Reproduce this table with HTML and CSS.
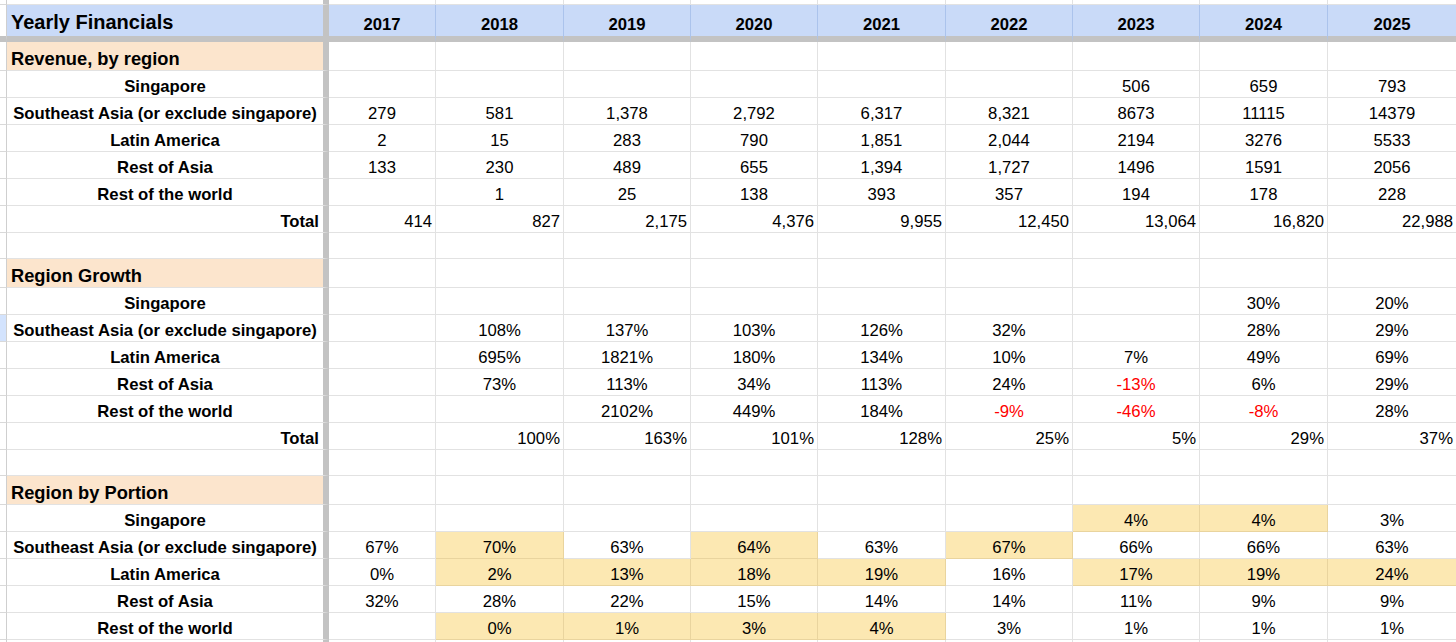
FILE: index.html
```html
<!DOCTYPE html>
<html lang="en">
<head>
<meta charset="utf-8">
<title>Yearly Financials</title>
<link rel="stylesheet" href="styles.css">
</head>
<body>
<div class="sheet">
  <div class="row top"><div class="rh"></div><div class="lab"></div><div></div><div></div><div></div><div></div><div></div><div></div><div></div><div></div><div></div></div>
  <div class="row head"><div class="rh"></div><div class="lab title">Yearly Financials</div><div>2017</div><div>2018</div><div>2019</div><div>2020</div><div>2021</div><div>2022</div><div>2023</div><div>2024</div><div>2025</div></div>

  <div class="row sec"><div class="rh"></div><div class="lab">Revenue, by region</div><div></div><div></div><div></div><div></div><div></div><div></div><div></div><div></div><div></div></div>
  <div class="row"><div class="rh"></div><div class="lab">Singapore</div><div></div><div></div><div></div><div></div><div></div><div></div><div>506</div><div>659</div><div>793</div></div>
  <div class="row"><div class="rh"></div><div class="lab">Southeast Asia (or exclude singapore)</div><div>279</div><div>581</div><div>1,378</div><div>2,792</div><div>6,317</div><div>8,321</div><div>8673</div><div>11115</div><div>14379</div></div>
  <div class="row"><div class="rh"></div><div class="lab">Latin America</div><div>2</div><div>15</div><div>283</div><div>790</div><div>1,851</div><div>2,044</div><div>2194</div><div>3276</div><div>5533</div></div>
  <div class="row"><div class="rh"></div><div class="lab">Rest of Asia</div><div>133</div><div>230</div><div>489</div><div>655</div><div>1,394</div><div>1,727</div><div>1496</div><div>1591</div><div>2056</div></div>
  <div class="row"><div class="rh"></div><div class="lab">Rest of the world</div><div></div><div>1</div><div>25</div><div>138</div><div>393</div><div>357</div><div>194</div><div>178</div><div>228</div></div>
  <div class="row tot"><div class="rh"></div><div class="lab">Total</div><div>414</div><div>827</div><div>2,175</div><div>4,376</div><div>9,955</div><div>12,450</div><div>13,064</div><div>16,820</div><div>22,988</div></div>
  <div class="row gap"><div class="rh"></div><div class="lab"></div><div></div><div></div><div></div><div></div><div></div><div></div><div></div><div></div><div></div></div>

  <div class="row sec"><div class="rh"></div><div class="lab">Region Growth</div><div></div><div></div><div></div><div></div><div></div><div></div><div></div><div></div><div></div></div>
  <div class="row"><div class="rh"></div><div class="lab">Singapore</div><div></div><div></div><div></div><div></div><div></div><div></div><div></div><div>30%</div><div>20%</div></div>
  <div class="row"><div class="rh sel"></div><div class="lab">Southeast Asia (or exclude singapore)</div><div></div><div>108%</div><div>137%</div><div>103%</div><div>126%</div><div>32%</div><div></div><div>28%</div><div>29%</div></div>
  <div class="row"><div class="rh"></div><div class="lab">Latin America</div><div></div><div>695%</div><div>1821%</div><div>180%</div><div>134%</div><div>10%</div><div>7%</div><div>49%</div><div>69%</div></div>
  <div class="row"><div class="rh"></div><div class="lab">Rest of Asia</div><div></div><div>73%</div><div>113%</div><div>34%</div><div>113%</div><div>24%</div><div class="neg">-13%</div><div>6%</div><div>29%</div></div>
  <div class="row"><div class="rh"></div><div class="lab">Rest of the world</div><div></div><div></div><div>2102%</div><div>449%</div><div>184%</div><div class="neg">-9%</div><div class="neg">-46%</div><div class="neg">-8%</div><div>28%</div></div>
  <div class="row tot"><div class="rh"></div><div class="lab">Total</div><div></div><div>100%</div><div>163%</div><div>101%</div><div>128%</div><div>25%</div><div>5%</div><div>29%</div><div>37%</div></div>
  <div class="row gap"><div class="rh"></div><div class="lab"></div><div></div><div></div><div></div><div></div><div></div><div></div><div></div><div></div><div></div></div>

  <div class="row sec"><div class="rh"></div><div class="lab">Region by Portion</div><div></div><div></div><div></div><div></div><div></div><div></div><div></div><div></div><div></div></div>
  <div class="row"><div class="rh"></div><div class="lab">Singapore</div><div></div><div></div><div></div><div></div><div></div><div></div><div class="hl">4%</div><div class="hl">4%</div><div>3%</div></div>
  <div class="row"><div class="rh"></div><div class="lab">Southeast Asia (or exclude singapore)</div><div>67%</div><div class="hl">70%</div><div>63%</div><div class="hl">64%</div><div>63%</div><div class="hl">67%</div><div>66%</div><div>66%</div><div>63%</div></div>
  <div class="row"><div class="rh"></div><div class="lab">Latin America</div><div>0%</div><div class="hl">2%</div><div class="hl">13%</div><div class="hl">18%</div><div class="hl">19%</div><div>16%</div><div class="hl">17%</div><div class="hl">19%</div><div class="hl">24%</div></div>
  <div class="row"><div class="rh"></div><div class="lab">Rest of Asia</div><div>32%</div><div>28%</div><div>22%</div><div>15%</div><div>14%</div><div>14%</div><div>11%</div><div>9%</div><div>9%</div></div>
  <div class="row"><div class="rh"></div><div class="lab">Rest of the world</div><div></div><div class="hl">0%</div><div class="hl">1%</div><div class="hl">3%</div><div class="hl">4%</div><div>3%</div><div>1%</div><div>1%</div><div>1%</div></div>
  <div class="row"><div class="rh"></div><div class="lab"></div><div></div><div></div><div></div><div></div><div></div><div></div><div></div><div></div><div></div></div>
</div>
</body>
</html>
```

FILE: styles.css
```css
html, body {
  margin: 0;
  padding: 0;
  background: #fff;
  overflow: hidden;
}

body {
  font-family: "Liberation Sans", Arial, sans-serif;
  font-size: 16.7px;
  color: #000;
}

.sheet {
  width: 1457px;
}

.row {
  display: grid;
  grid-template-columns: 7px 322px 107px 128px 127px 127px 128px 127px 127px 128px 129px;
  height: 27px;
}

.row.top { height: 5px; }
.row.head { height: 37px; }
.row.sec { height: 29px; }
.row.gap { height: 26px; }

.row > div {
  box-sizing: border-box;
  min-width: 0;
  overflow: hidden;
  white-space: nowrap;
  display: flex;
  align-items: flex-end;
  justify-content: center;
  line-height: 1;
  padding: 0 3px 1px;
  border-right: 1px solid #e2e2e2;
  border-bottom: 1px solid #e2e2e2;
}

.row > .rh {
  padding: 0;
  background: #fff;
  border-right-color: #cfcfcf;
  border-bottom-color: #d9d9d9;
}

.row > .sel {
  background: #d3e3fd;
}

.row > .lab {
  font-weight: bold;
  border-right: 6px solid #c3c3c3;
}

.head > div {
  background: #c9daf8;
  font-weight: bold;
  padding-bottom: 2px;
  border-right-color: #abc3ec;
  border-bottom: 6px solid #c3c3c3;
}

.head > .rh {
  background: #fff;
  border-bottom-color: #c3c3c3;
}

.head > .title {
  font-size: 20px;
  justify-content: flex-start;
  padding-left: 4px;
  padding-bottom: 4px;
}

.sec > .lab {
  background: #fce5cd;
  font-size: 18.3px;
  justify-content: flex-start;
  padding-left: 4px;
  padding-bottom: 2px;
}

.tot > div {
  justify-content: flex-end;
}

.tot > .lab {
  padding-right: 4px;
}

.row > .hl {
  background: #fce8b2;
  border-right-color: #e9d49e;
  border-bottom-color: #e9d49e;
}

.neg {
  color: #f00;
}
```
